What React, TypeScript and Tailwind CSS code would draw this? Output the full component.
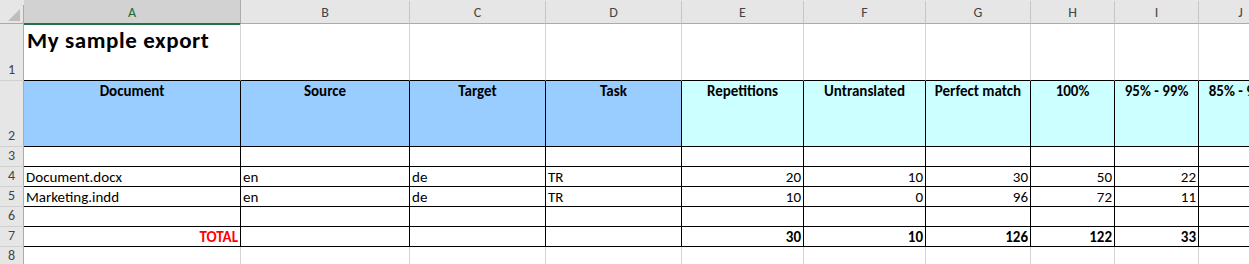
import type { ReactNode } from 'react';

const COLS = ['A', 'B', 'C', 'D', 'E', 'F', 'G', 'H', 'I', 'J'];

const HEADERS = [
  'Document',
  'Source',
  'Target',
  'Task',
  'Repetitions',
  'Untranslated',
  'Perfect match',
  '100%',
  '95% - 99%',
  '85% - 94%',
];

type Row = { doc: string; src: string; tgt: string; task: string; nums: number[] };

const ROWS: Row[] = [
  { doc: 'Document.docx', src: 'en', tgt: 'de', task: 'TR', nums: [20, 10, 30, 50, 22] },
  { doc: 'Marketing.indd', src: 'en', tgt: 'de', task: 'TR', nums: [10, 0, 96, 72, 11] },
];

const TOTALS = [30, 10, 126, 122, 33];

const font = { fontFamily: 'Carlito, Calibri, Lato, "Liberation Sans", sans-serif' };

function RowHead({ n }: { n: number }) {
  return (
    <div className="flex items-end justify-center bg-[#e6e6e6] border-r border-r-[#ababab] border-b border-b-[#d0d0d0] pb-[2px] text-[14px] leading-[16px] text-[#444]">
      {n}
    </div>
  );
}

function Cell({ children, className = '' }: { children?: ReactNode; className?: string }) {
  return (
    <div className={`flex overflow-hidden whitespace-nowrap border-r border-b text-[15px] leading-[18px] ${className}`}>
      {children}
    </div>
  );
}

export default function App() {
  return (
    <div className="w-[1249px] h-[264px] overflow-hidden bg-white text-black" style={font}>
      <div className="grid w-max grid-cols-[24px_217px_169px_136px_136px_122px_122px_105px_84px_84px_84px] grid-rows-[24px_57px_66px_20px_20px_20px_20px_20px_20px]">
        {/* column header strip */}
        <div className="flex flex-col bg-[#e6e6e6]">
          <div className="h-[5px]" />
          <div className="relative flex-1 border-r border-r-[#ababab] border-b border-b-[#ababab]">
            <svg className="absolute left-[8px] top-[4px]" width="12" height="12" viewBox="0 0 12 12">
              <polygon points="12,0 12,12 0,12" fill="#bdbdbd" />
            </svg>
          </div>
        </div>
        {COLS.map((c, i) => (
          <div key={c} className="flex flex-col bg-[#e6e6e6]">
            <div className="h-[5px]" />
            {i === 0 ? (
              <div className="flex flex-1 items-center justify-center bg-[#d2d2d2] border-r border-r-[#ababab] border-b-2 border-b-[#217346] pt-[2px] text-[14px] text-[#1d6b3e]">
                {c}
              </div>
            ) : (
              <div className="flex flex-1 items-center justify-center border-r border-r-[#c6c6c6] border-b border-b-[#ababab] pt-[1px] text-[14px] text-[#444]">
                {c}
              </div>
            )}
          </div>
        ))}

        {/* row 1: title */}
        <RowHead n={1} />
        {COLS.map((c, i) => (
          <Cell key={c} className="border-r-[#d4d4d4] border-b-black">
            {i === 0 && (
              <span className="pl-[3px] pt-[3px] text-[23px] leading-[27px] font-bold tracking-[0.6px]">My sample export</span>
            )}
          </Cell>
        ))}

        {/* row 2: column titles */}
        <RowHead n={2} />
        {HEADERS.map((h, i) => (
          <Cell
            key={h}
            className={`justify-center border-black pt-[1px] font-bold ${i < 4 ? 'bg-[#99ccff]' : 'bg-[#ccffff]'}`}
          >
            {h}
          </Cell>
        ))}

        {/* row 3: spacer */}
        <RowHead n={3} />
        {COLS.map(c => (
          <Cell key={c} className="border-black" />
        ))}

        {/* rows 4-5: data */}
        {ROWS.map((r, ri) => (
          <div key={r.doc} className="contents">
            <RowHead n={4 + ri} />
            {[r.doc, r.src, r.tgt, r.task].map((t, i) => (
              <Cell key={i} className="items-end border-black pl-[2px]">
                {t}
              </Cell>
            ))}
            {r.nums.map((v, i) => (
              <Cell key={`n${i}`} className="items-end justify-end border-black pr-[2px]">
                {v}
              </Cell>
            ))}
            <Cell className="border-black" />
          </div>
        ))}

        {/* row 6: spacer */}
        <RowHead n={6} />
        {COLS.map(c => (
          <Cell key={c} className="border-black" />
        ))}

        {/* row 7: totals */}
        <RowHead n={7} />
        <Cell className="items-end justify-end border-black pr-[2px] font-bold text-[#ff0000]">TOTAL</Cell>
        <Cell className="border-black" />
        <Cell className="border-black" />
        <Cell className="border-black" />
        {TOTALS.map((v, i) => (
          <Cell key={i} className="items-end justify-end border-black pr-[2px] font-bold">
            {v}
          </Cell>
        ))}
        <Cell className="border-black" />

        {/* row 8 */}
        <RowHead n={8} />
        {COLS.map(c => (
          <Cell key={c} className="border-r-[#d4d4d4] border-b-[#d4d4d4]" />
        ))}
      </div>
    </div>
  );
}
